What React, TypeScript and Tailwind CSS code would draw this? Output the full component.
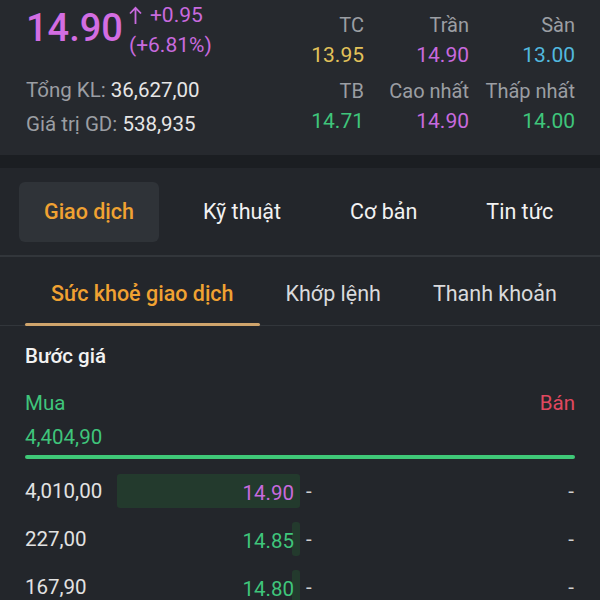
import React from "react";

const stats = [
  { label: "TC", value: "13.95", color: "text-[#e3c25a]" },
  { label: "Trần", value: "14.90", color: "text-[#c86ade]" },
  { label: "Sàn", value: "13.00", color: "text-[#52b8de]" },
  { label: "TB", value: "14.71", color: "text-[#3fc57b]" },
  { label: "Cao nhất", value: "14.90", color: "text-[#c86ade]" },
  { label: "Thấp nhất", value: "14.00", color: "text-[#3fc57b]" },
];

const mainTabs = ["Giao dịch", "Kỹ thuật", "Cơ bản", "Tin tức"];
const subTabs = ["Sức khoẻ giao dịch", "Khớp lệnh", "Thanh khoản"];

const rows = [
  { qty: "4,010,00", price: "14.90", color: "text-[#c86ade]", bar: 183 },
  { qty: "227,00", price: "14.85", color: "text-[#3fc57b]", bar: 8 },
  { qty: "167,90", price: "14.80", color: "text-[#3fc57b]", bar: 8 },
];

function StatCell({ label, value, color, top }: { label: string; value: string; color: string; top?: boolean }) {
  return (
    <div className={`flex flex-col items-end ${top ? "" : "mt-[5px]"}`}>
      <span className="text-[20px] leading-[30px] text-[#9b9ea3]">{label}</span>
      <span className={`text-[21px] leading-[31px] ${color}`}>{value}</span>
    </div>
  );
}

function UpArrow() {
  return (
    <svg width="13" height="19" viewBox="0 0 13 19" className="mr-[8px] inline-block">
      <path d="M6.5 18V2M1 7.5L6.5 1.8L12 7.5" fill="none" stroke="currentColor" strokeWidth="1.8" />
    </svg>
  );
}

export default function App() {
  return (
    <div
      className="h-[600px] w-[600px] overflow-hidden bg-[#23262b] text-[#e4e4e4]"
      style={{ fontFamily: "Roboto, 'Noto Sans', sans-serif" }}
    >
      {/* quote header */}
      <div className="flex h-[155px] justify-between bg-[#26292e] pl-[26px] pr-[25px]">
        <div className="flex flex-col">
          <div className="flex h-[56px] items-center gap-[6px]">
            <span className="text-[38px] font-medium leading-none text-[#d36de2]">14.90</span>
            <div className="flex flex-col self-start text-[21px] leading-[30px] text-[#c86ade]">
              <span className="flex items-center">
                <UpArrow />
                +0.95
              </span>
              <span>(+6.81%)</span>
            </div>
          </div>
          <div className="mt-[17px] text-[20.5px] leading-[34px]">
            <span className="text-[#9b9ea3]">Tổng KL: </span>
            <span className="text-[#e6e6e6]">36,627,00</span>
          </div>
          <div className="text-[20.5px] leading-[34px]">
            <span className="text-[#9b9ea3]">Giá trị GD: </span>
            <span className="text-[#e6e6e6]">538,935</span>
          </div>
        </div>
        <div className="grid grid-cols-[105px_105px_106px] content-start pt-[10px]">
          {stats.map((s, i) => (
            <StatCell key={s.label} {...s} top={i < 3} />
          ))}
        </div>
      </div>
      <div className="h-[13px] bg-[#1b1e22]" />

      {/* main tabs */}
      <div className="flex gap-[19px] border-b-2 border-[#32363b] px-[19px] pb-[13px] pt-[14px]">
        {mainTabs.map((t, i) => (
          <div
            key={t}
            className={`flex h-[60px] shrink-0 items-center whitespace-nowrap rounded-[6px] px-[25px] text-[21.5px] ${
              i === 0 ? "bg-[#2f3338] font-medium text-[#f0a232]" : "text-[#f2f2f2]"
            }`}
          >
            {t}
          </div>
        ))}
      </div>

      {/* sub tabs */}
      <div className="flex border-b border-[#32363b] px-[25px]">
        {subTabs.map((t, i) => (
          <div
            key={t}
            className={`relative flex h-[68px] shrink-0 items-center whitespace-nowrap px-[26px] pt-[6px] text-[21.5px] ${
              i === 0 ? "font-medium text-[#f0a232]" : "text-[#d9dadc]"
            }`}
          >
            {t}
            {i === 0 && (
              <div className="absolute inset-x-0 -bottom-px h-[3px] rounded-full bg-[#cfa46c]" />
            )}
          </div>
        ))}
      </div>

      {/* price steps */}
      <div className="px-[25px] pt-[15px]">
        <div className="text-[20.5px] font-medium leading-[30px] text-[#f2f2f2]">Bước giá</div>
        <div className="mt-[17px] flex justify-between text-[20.5px] leading-[30px]">
          <span className="text-[#3fc57b]">Mua</span>
          <span className="text-[#e0485f]">Bán</span>
        </div>
        <div className="mt-[4px] text-[20.5px] leading-[30px] text-[#3fc57b]">4,404,90</div>
        <div className="mt-[3px] h-[4px] rounded-full bg-[#3fc878]" />

        <div className="mt-[15px] flex flex-col gap-[14px]">
          {rows.map((r) => (
            <div key={r.qty} className="flex h-[34px] items-center text-[20.5px]">
              <span className="w-[92px] text-[#e2e2e2]">{r.qty}</span>
              <div className="relative flex h-full w-[183px] items-center justify-end pr-[6px]">
                <div
                  className="absolute inset-y-0 right-0 rounded-[3px] bg-[#233a2d]"
                  style={{ width: r.bar }}
                />
                <span className={`relative pt-[4px] ${r.color}`}>{r.price}</span>
              </div>
              <span className="ml-[6px] text-[#d0d0d0]">-</span>
              <span className="ml-auto pr-[1px] text-[#d0d0d0]">-</span>
            </div>
          ))}
        </div>
      </div>
    </div>
  );
}
